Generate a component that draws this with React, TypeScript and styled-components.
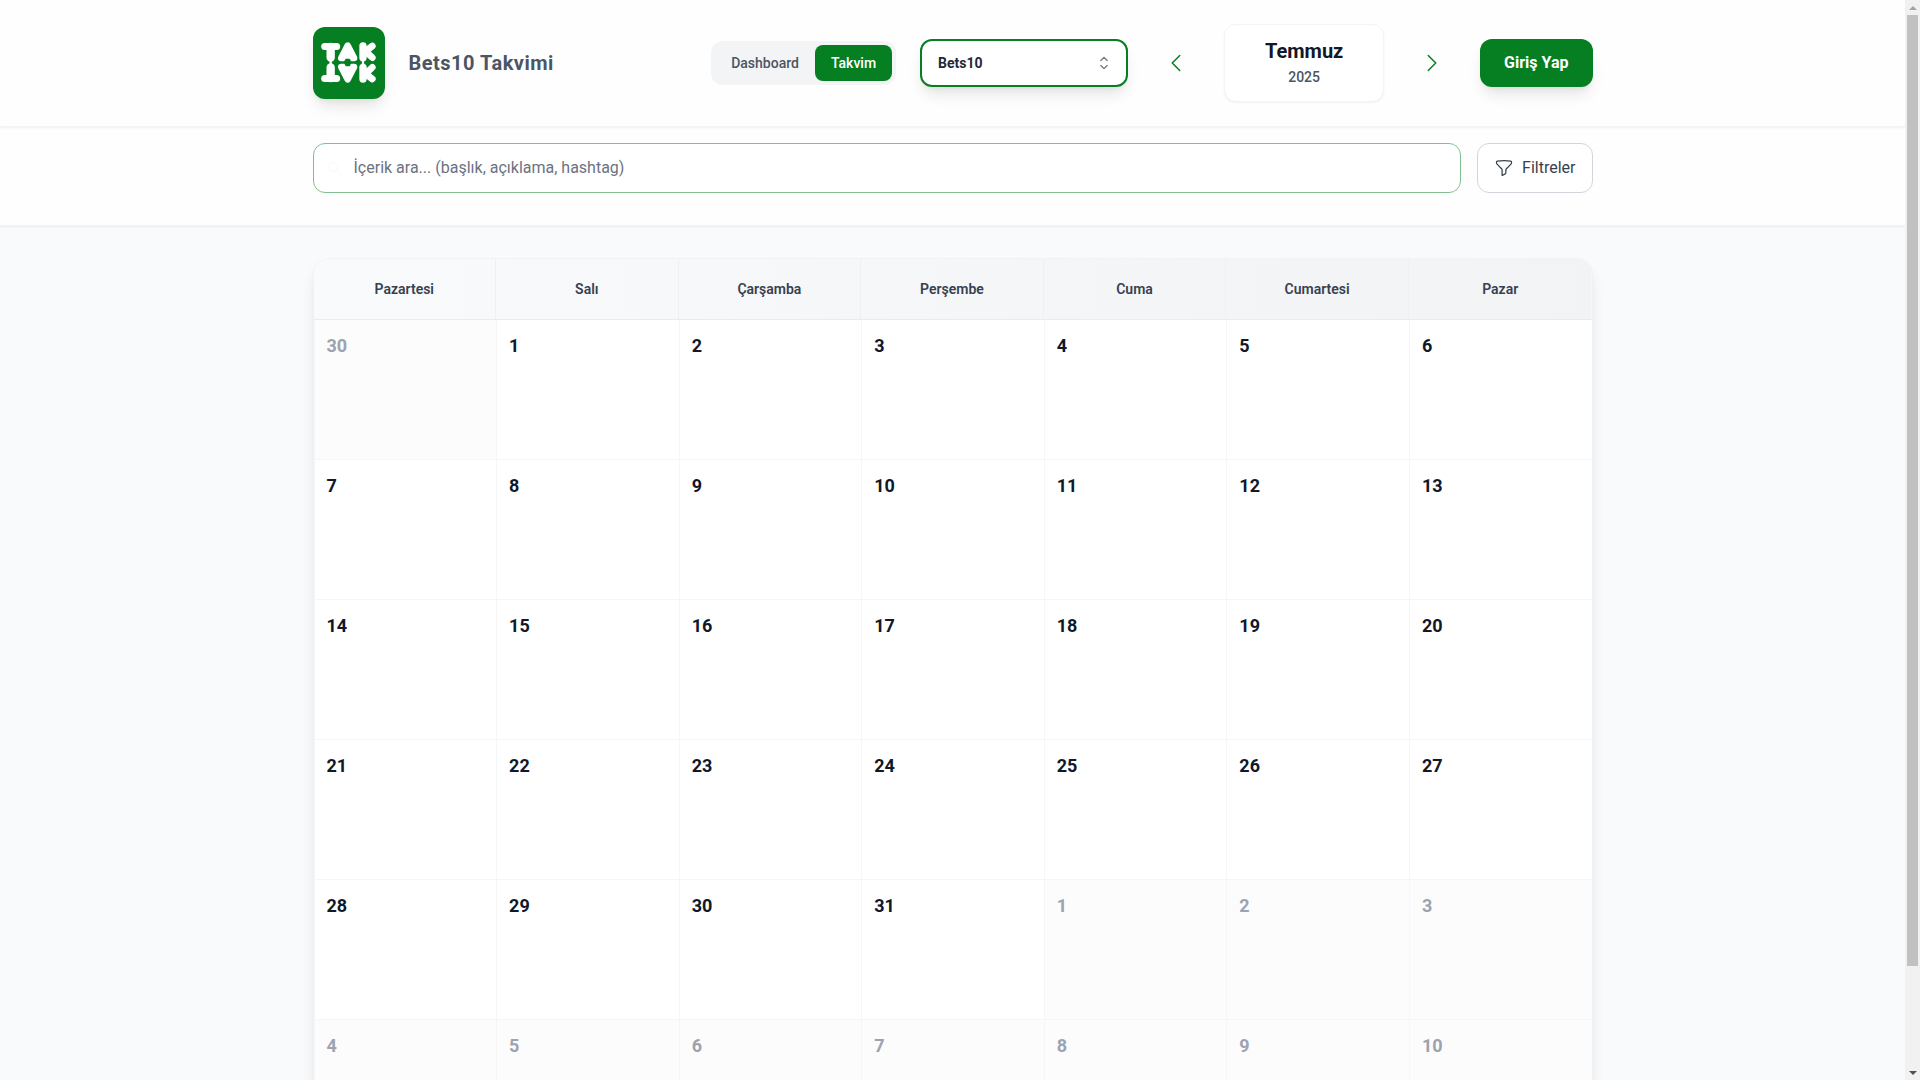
import React, { useState } from "react";
import styled, { createGlobalStyle } from "styled-components";
import {
  HiOutlineChevronLeft,
  HiOutlineChevronRight,
  HiOutlineChevronUpDown,
  HiOutlineFunnel,
  HiOutlineMagnifyingGlass,
} from "react-icons/hi2";

const green = "#057f21";

const GlobalStyle = createGlobalStyle`
  *, *::before, *::after { box-sizing: border-box; }
  html, body { margin: 0; background: #f9fafc; }
  body { font-family: Roboto, "Liberation Sans", sans-serif; color: #111827; }
  button, input, select { font: inherit; color: inherit; margin: 0; }
`;

const Viewport = styled.div`
  display: flex;
  height: 100vh;
  overflow: hidden;
`;

const Page = styled.div`
  flex: 1;
  min-width: 0;
  overflow-y: auto;
  scrollbar-width: none;
  background: #f9fafc;
`;

const ScrollRail = styled.div`
  flex: none;
  width: 15px;
  display: grid;
  grid-template-rows: 15px minmax(0, 951fr) minmax(0, 99fr) 15px;
  background: #f1f1f1;
`;

const ScrollThumb = styled.div`
  margin: 0 2px;
  background: #c1c1c1;
`;

const ScrollArrow = styled.div<{ $down?: boolean }>`
  grid-row: ${(p) => (p.$down ? 4 : 1)};
  place-self: center;
  border: 4px solid transparent;
  ${(p) =>
    p.$down
      ? "border-top-color: #505050; border-bottom-width: 0;"
      : "border-bottom-color: #a3a3a3; border-top-width: 0;"}
`;

const Container = styled.div`
  max-width: 1280px;
  margin: 0 auto;
`;

const Header = styled.header`
  position: relative;
  padding: 24px 0;
  background: #fefefe;
  border-bottom: 1px solid #f3f4f6;
  box-shadow: 0 1px 2px rgba(0, 0, 0, 0.06);
`;

const HeaderRow = styled(Container)`
  display: flex;
  align-items: center;
  justify-content: space-between;
`;

const Brand = styled.div`
  display: flex;
  align-items: center;
  gap: 24px;
`;

const LogoMark = styled.svg`
  width: 72px;
  height: 72px;
  border-radius: 12px;
  background: ${green};
  box-shadow: 0 10px 15px -3px rgba(0, 0, 0, 0.1), 0 4px 6px -4px rgba(0, 0, 0, 0.1);
`;

const Title = styled.h1`
  margin: 0;
  font-size: 20px;
  line-height: 28px;
  font-weight: 700;
  letter-spacing: 0.025em;
  color: #4b5563;
`;

const Controls = styled.div`
  display: flex;
  align-items: center;
  gap: 24px;
`;

const Tabs = styled.nav`
  display: flex;
  padding: 4px;
  border-radius: 12px;
  background: #f3f4f6;
`;

const Tab = styled.button<{ $active?: boolean }>`
  padding: 8px 16px;
  border: 0;
  border-radius: 8px;
  font-size: 14px;
  line-height: 20px;
  font-weight: 500;
  cursor: pointer;
  background: ${(p) => (p.$active ? green : "transparent")};
  color: ${(p) => (p.$active ? "#fff" : "#4b5563")};
`;

const SelectBox = styled.label`
  display: grid;
  align-items: center;
  width: 208px;
  color: #6b7280;
  & > * {
    grid-area: 1 / 1;
  }
  & > svg {
    justify-self: end;
    margin-right: 14px;
    pointer-events: none;
    z-index: 1;
  }
`;

const BrandSelect = styled.select`
  appearance: none;
  width: 100%;
  height: 48px;
  padding: 0 40px 0 16px;
  border: 2px solid ${green};
  border-radius: 12px;
  background: #fff;
  color: #1f2937;
  font-size: 14px;
  font-weight: 700;
  box-shadow: 0 10px 15px -3px rgba(0, 0, 0, 0.1), 0 4px 6px -4px rgba(0, 0, 0, 0.1);
`;

const ArrowButton = styled.button`
  display: flex;
  padding: 12px;
  border: 0;
  background: transparent;
  color: ${green};
  cursor: pointer;
`;

const MonthCard = styled.div`
  display: flex;
  flex-direction: column;
  width: 160px;
  height: 78px;
  padding-top: 12px;
  border: 1px solid #f3f4f6;
  border-radius: 12px;
  background: #fff;
  text-align: center;
  box-shadow: 0 1px 2px rgba(0, 0, 0, 0.05);
`;

const MonthName = styled.strong`
  font-size: 20px;
  line-height: 28px;
  font-weight: 700;
  color: #111827;
`;

const Year = styled.span`
  font-size: 14px;
  line-height: 24px;
  font-weight: 500;
  color: #4b5563;
`;

const LoginButton = styled.button`
  padding: 12px 24px;
  border: 0;
  border-radius: 12px;
  background: ${green};
  color: #fff;
  font-size: 16px;
  line-height: 24px;
  font-weight: 700;
  cursor: pointer;
  box-shadow: 0 10px 15px -3px rgba(0, 0, 0, 0.1), 0 4px 6px -4px rgba(0, 0, 0, 0.1);
`;

const SearchSection = styled.section`
  padding: 16px 0 32px;
  background: #fefefe;
  border-bottom: 1px solid #f3f4f6;
  box-shadow: 0 1px 2px rgba(0, 0, 0, 0.06);
`;

const SearchRow = styled(Container)`
  display: flex;
  gap: 16px;
`;

const SearchBox = styled.label`
  flex: 1;
  display: flex;
  align-items: center;
  gap: 12px;
  height: 50px;
  padding: 0 12px;
  border: 1px solid #82bf90;
  border-radius: 12px;
  background: #fff;
  & > svg {
    flex: none;
    width: 16px;
    height: 16px;
    color: #fafafa;
  }
`;

const SearchInput = styled.input`
  flex: 1;
  min-width: 0;
  padding: 0;
  border: 0;
  outline: 0;
  background: transparent;
  font-size: 16px;
  line-height: 24px;
  &::placeholder {
    color: #6b7280;
    opacity: 1;
  }
`;

const FilterButton = styled.button`
  display: flex;
  align-items: center;
  gap: 8px;
  height: 50px;
  padding: 0 16px;
  border: 1px solid #d1d5db;
  border-radius: 12px;
  background: #fff;
  color: #374151;
  font-size: 16px;
  line-height: 24px;
  cursor: pointer;
`;

const Main = styled.main`
  padding: 32px 0;
`;

const CalendarCard = styled(Container)`
  border: 1px solid #f1f2f4;
  border-radius: 16px;
  overflow: hidden;
  background: #fff;
  box-shadow: 0 10px 15px -3px rgba(0, 0, 0, 0.1), 0 4px 6px -4px rgba(0, 0, 0, 0.1);
`;

const Calendar = styled.table`
  width: 100%;
  table-layout: fixed;
  border-collapse: separate;
  border-spacing: 0;
`;

const HeadGroup = styled.thead`
  background: linear-gradient(to right, #f9fafb, #f2f3f5);
`;

const DayName = styled.th`
  height: 61px;
  padding: 20px 0;
  border-bottom: 1px solid #e9ebee;
  border-right: 1px solid #eff0f2;
  font-size: 14px;
  line-height: 20px;
  font-weight: 600;
  color: #374151;
  &:last-child {
    border-right: 0;
  }
`;

const DayCell = styled.td<{ $outside: boolean }>`
  height: 140px;
  padding: 12px;
  vertical-align: top;
  border-bottom: 1px solid #f5f6f7;
  border-left: 1px solid #f5f6f7;
  background: ${(p) => (p.$outside ? "#fcfcfc" : "#fff")};
  color: ${(p) => (p.$outside ? "#9ca3af" : "#111827")};
  font-size: 18px;
  line-height: 28px;
  font-weight: 700;
`;

const dayNames = ["Pazartesi", "Salı", "Çarşamba", "Perşembe", "Cuma", "Cumartesi", "Pazar"];

const firstShown = new Date(2025, 5, 30);
const weeks = Array.from({ length: 6 }, (_, w) =>
  Array.from({ length: 7 }, (_, d) => {
    const date = new Date(firstShown);
    date.setDate(firstShown.getDate() + w * 7 + d);
    return { day: date.getDate(), outside: date.getMonth() !== 6 };
  })
);

function LogoHalf() {
  return (
    <>
      <path d="M35 58.500H71" strokeWidth="21" />
      <path d="M53 60V92" strokeWidth="25" />
      <path d="M104 56L85 93H123Z" strokeWidth="20" />
      <path d="M150 57V92" strokeWidth="22" />
      <path d="M155 75L178 57M157 72L178 92" strokeWidth="20" />
    </>
  );
}

function Logo() {
  return (
    <LogoMark viewBox="0 0 216 216" role="img" aria-label="Takvim">
      <g fill="#fff" stroke="#fff" strokeLinecap="round" strokeLinejoin="round">
        <LogoHalf />
        <g transform="translate(0 213) scale(1 -1)">
          <LogoHalf />
        </g>
        <path d="M53 98V115M150 98V115" strokeWidth="7" />
      </g>
      <path d="M98 95H110L116 106L110 118H98L92 106Z" fill={green} />
    </LogoMark>
  );
}

export default function App() {
  const [tab, setTab] = useState("Takvim");
  return (
    <>
      <GlobalStyle />
      <Viewport>
        <Page>
          <Header>
            <HeaderRow>
              <Brand>
                <Logo />
                <Title>Bets10 Takvimi</Title>
              </Brand>
              <Controls>
                <Tabs>
                  {["Dashboard", "Takvim"].map((name) => (
                    <Tab key={name} type="button" $active={tab === name} onClick={() => setTab(name)}>
                      {name}
                    </Tab>
                  ))}
                </Tabs>
                <SelectBox>
                  <BrandSelect aria-label="Marka" defaultValue="Bets10">
                    <option>Bets10</option>
                  </BrandSelect>
                  <HiOutlineChevronUpDown size={20} />
                </SelectBox>
                <ArrowButton type="button" aria-label="Önceki ay">
                  <HiOutlineChevronLeft size={24} />
                </ArrowButton>
                <MonthCard>
                  <MonthName>Temmuz</MonthName>
                  <Year>2025</Year>
                </MonthCard>
                <ArrowButton type="button" aria-label="Sonraki ay">
                  <HiOutlineChevronRight size={24} />
                </ArrowButton>
                <LoginButton type="button">Giriş Yap</LoginButton>
              </Controls>
            </HeaderRow>
          </Header>
          <SearchSection>
            <SearchRow>
              <SearchBox>
                <HiOutlineMagnifyingGlass />
                <SearchInput
                  type="text"
                  aria-label="İçerik ara"
                  placeholder="İçerik ara... (başlık, açıklama, hashtag)"
                />
              </SearchBox>
              <FilterButton type="button">
                <HiOutlineFunnel size={20} />
                Filtreler
              </FilterButton>
            </SearchRow>
          </SearchSection>
          <Main>
            <CalendarCard>
              <Calendar>
                <HeadGroup>
                  <tr>
                    {dayNames.map((name) => (
                      <DayName key={name} scope="col">
                        {name}
                      </DayName>
                    ))}
                  </tr>
                </HeadGroup>
                <tbody>
                  {weeks.map((week, w) => (
                    <tr key={w}>
                      {week.map(({ day, outside }, d) => (
                        <DayCell key={d} $outside={outside}>
                          {day}
                        </DayCell>
                      ))}
                    </tr>
                  ))}
                </tbody>
              </Calendar>
            </CalendarCard>
          </Main>
        </Page>
        <ScrollRail aria-hidden="true">
          <ScrollArrow />
          <ScrollThumb />
          <ScrollArrow $down />
        </ScrollRail>
      </Viewport>
    </>
  );
}
